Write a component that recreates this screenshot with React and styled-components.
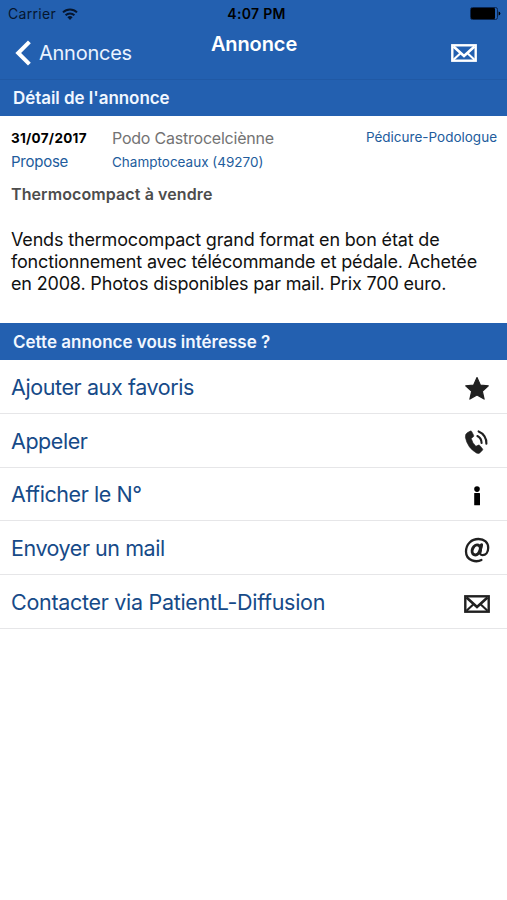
import React from 'react'
import styled, { createGlobalStyle } from 'styled-components'

const GlobalStyle = createGlobalStyle`
  * {
    box-sizing: border-box;
  }

  body {
    margin: 0;
    background-color: #fff;
    font-family: Inter, "Liberation Sans", sans-serif;
  }

  h1, h2, h3, p {
    margin: 0;
  }
`

const WifiIcon = () => (
  <svg width="16" height="12" viewBox="0 0 16 12">
    <path d="M1 4.4 A10 10 0 0 1 15 4.4" fill="none" stroke="#06162e" strokeWidth="2" />
    <path d="M3.6 7.2 A6.3 6.3 0 0 1 12.4 7.2" fill="none" stroke="#06162e" strokeWidth="2" />
    <path d="M8 12 L5.4 9.3 A3.8 3.8 0 0 1 10.6 9.3 Z" fill="#06162e" />
  </svg>
)

const BatteryIcon = () => (
  <svg width="31" height="13" viewBox="0 0 31 13">
    <rect x="0.5" y="0.5" width="27" height="12" rx="2" fill="none" stroke="#0a2650" strokeWidth="1" />
    <rect x="1" y="1" width="24" height="11" rx="1" fill="#000" />
    <path d="M28.6 4.4 Q30.4 5 30.4 6.5 T28.6 8.6 Z" fill="#000" />
  </svg>
)

const ChevronIcon = () => (
  <svg width="17" height="26" viewBox="0 0 17 26">
    <path d="M14.4 1.8 L3.2 13 L14.4 24.2" fill="none" stroke="#fff" strokeWidth="4" />
  </svg>
)

const MailIcon = () => (
  <svg width="26" height="18" viewBox="0 0 26 18" fill="none" stroke="currentColor">
    <rect x="1.3" y="1.3" width="23.4" height="15.4" strokeWidth="2.4" />
    <path d="M2.5 2.5 L13 12 L23.5 2.5" strokeWidth="2.7" />
    <path d="M2.5 15.8 L9.2 9.6 M23.5 15.8 L16.8 9.6" strokeWidth="2.1" />
  </svg>
)

const StarIcon = () => (
  <svg width="26" height="25" viewBox="0 0 26 25">
    <path
      d="M13 1.6 L16.3 9 L24.3 9.8 L18.3 15.2 L20.1 23.1 L13 19 L5.9 23.1 L7.7 15.2 L1.7 9.8 L9.7 9 Z"
      fill="currentColor"
      stroke="currentColor"
      strokeWidth="1.2"
      strokeLinejoin="round"
    />
  </svg>
)

const PhoneIcon = () => (
  <svg width="26" height="26" viewBox="0 0 26 26">
    <path
      d="M3.2 3.8 L6.4 2 Q7.2 1.7 7.7 2.5 L9.7 6.4 Q10 7.2 9.3 7.8 L7.2 9.4 Q8.4 14 11.9 17.3 L14.4 16.1 Q15.2 15.8 15.8 16.5 L18.6 19.9 Q19 20.7 18.4 21.3 L15.8 23.9 Q14.4 24.9 12.4 24 Q3.4 18.6 1.4 8.4 Q1.1 5.2 3.2 3.8 Z"
      fill="currentColor"
      stroke="currentColor"
      strokeWidth="0.6"
    />
    <path
      d="M13.4 7 A8 8 0 0 1 17.6 14 M14.6 2.4 A12.4 12.4 0 0 1 22.4 14.8"
      fill="none"
      stroke="currentColor"
      strokeWidth="2.1"
      strokeLinecap="round"
    />
  </svg>
)

const InfoIcon = () => (
  <svg width="26" height="20" viewBox="0 0 26 20">
    <circle cx="13" cy="3.1" r="2.8" fill="#000" />
    <rect x="10.2" y="7" width="5.8" height="12.2" rx="0.5" fill="#000" />
  </svg>
)

const AtIcon = () => (
  <svg width="26" height="26" viewBox="0 0 26 26" fill="none" stroke="currentColor" strokeLinecap="round">
    <path
      d="M17.4 23 C13 25.4 2 24.6 2 14.6 C2 7 7.6 2 14.4 2 C20.4 2 24.2 5.6 24.2 10.8 C24.2 15.6 21.6 18.2 18.6 18.2 C16.4 18.2 15.8 16.8 16.2 14.8 L17.8 7.6"
      strokeWidth="2.3"
    />
    <ellipse cx="12.2" cy="12.9" rx="3.8" ry="5.2" transform="rotate(24 12.2 12.9)" strokeWidth="3" />
    <path d="M17.4 8 L15.8 15.6" strokeWidth="3" />
  </svg>
)

const actions = [
  { id: 1, label: 'Ajouter aux favoris', icon: <StarIcon />, spacing: '-0.4px' },
  { id: 2, label: 'Appeler', icon: <PhoneIcon />, spacing: '-0.45px' },
  { id: 3, label: 'Afficher le N°', icon: <InfoIcon />, spacing: '-0.42px' },
  { id: 4, label: 'Envoyer un mail', icon: <AtIcon />, spacing: '-0.46px' },
  { id: 5, label: 'Contacter via PatientL-Diffusion', icon: <MailIcon />, spacing: '-0.3px' },
]

const App = () => {
  return (
    <Screen>
      <GlobalStyle />
      <Header>
        <StatusBar>
          <Carrier>
            Carrier
            <WifiIcon />
          </Carrier>
          <Clock>4:07 PM</Clock>
          <Battery>
            <BatteryIcon />
          </Battery>
        </StatusBar>
        <NavBar>
          <BackLink>
            <ChevronIcon />
            <span>Annonces</span>
          </BackLink>
          <Title>Annonce</Title>
          <MailButton>
            <MailIcon />
          </MailButton>
        </NavBar>
      </Header>
      <SectionTitle>Détail de l'annonce</SectionTitle>
      <Details>
        <Meta>
          <Day>31/07/2017</Day>
          <Author>Podo Castrocelciènne</Author>
          <Job>Pédicure-Podologue</Job>
          <Kind>Propose</Kind>
          <City>Champtoceaux (49270)</City>
        </Meta>
        <Subject>Thermocompact à vendre</Subject>
        <Message>
          Vends thermocompact grand format en bon état de<br />
          fonctionnement avec télécommande et pédale. Achetée<br />
          en 2008. Photos disponibles par mail. Prix 700 euro.
        </Message>
      </Details>
      <SectionTitle $tall>Cette annonce vous intéresse ?</SectionTitle>
      <Actions>
        {actions.map((curElem) => {
          const { id, label, icon, spacing } = curElem
          return (
            <Action key={id}>
              <ActionLabel $spacing={spacing}>{label}</ActionLabel>
              <ActionIcon>{icon}</ActionIcon>
            </Action>
          )
        })}
      </Actions>
    </Screen>
  )
}

const Screen = styled.main`
  width: 507px;
  height: 900px;
  overflow: hidden;
  background-color: #fff;
`

const Header = styled.header`
  height: 80px;
  color: #fff;
  background-color: #2360b0;
  border-bottom: 1px solid #2059a5;
`

const StatusBar = styled.div`
  display: grid;
  grid-template-columns: 1fr auto 1fr;
  align-items: center;
  height: 27px;
  padding: 0 6px 0 8px;
  color: #000;
  font-size: 14px;
`

const Carrier = styled.span`
  display: flex;
  align-items: center;
  gap: 6px;
  color: #06162e;
  letter-spacing: 0.3px;
`

const Clock = styled.span`
  padding-left: 4px;
  font-weight: 600;
  letter-spacing: 0.3px;
`

const Battery = styled.span`
  display: flex;
  justify-content: flex-end;
`

const NavBar = styled.nav`
  display: grid;
  grid-template-columns: 1fr auto 1fr;
  height: 52px;
`

const BackLink = styled.a`
  display: flex;
  align-items: center;
  gap: 7px;
  padding-left: 15px;
  font-size: 20px;
  letter-spacing: -0.25px;
  color: #eaf3ff;
`

const Title = styled.h1`
  padding: 5px 0 0 1px;
  font-size: 20px;
  line-height: 24px;
  font-weight: 600;
  letter-spacing: -0.1px;
`

const MailButton = styled.span`
  display: flex;
  align-items: center;
  justify-content: flex-end;
  padding-right: 30px;
`

const SectionTitle = styled.h2`
  display: flex;
  align-items: center;
  height: ${({ $tall }) => ($tall ? '37px' : '36px')};
  padding-left: 13px;
  color: #f1f7ff;
  font-size: 17px;
  font-weight: 600;
  letter-spacing: ${({ $tall }) => ($tall ? '0' : '-0.05px')};
  background-color: #2360b0;
`

const Details = styled.section`
  height: 207px;
  padding: 10px 10px 0 11px;
`

const Meta = styled.div`
  display: grid;
  grid-template-columns: 101px 1fr auto;
  grid-template-rows: 24px 23px;
  align-items: center;
  color: #225c9c;
`

const Day = styled.span`
  color: #000;
  font-size: 13.5px;
  font-weight: 700;
  letter-spacing: 0.28px;
`

const Author = styled.span`
  color: #737373;
  font-size: 16px;
  letter-spacing: -0.22px;
`

const Job = styled.span`
  padding-bottom: 2px;
  font-size: 13.5px;
`

const Kind = styled.span`
  font-size: 15px;
  letter-spacing: -0.25px;
`

const City = styled.span`
  font-size: 13.5px;
`

const Subject = styled.h3`
  margin-top: 10px;
  color: #4d4d4d;
  font-size: 16px;
  line-height: 22px;
  font-weight: 600;
  letter-spacing: 0.1px;
`

const Message = styled.p`
  margin-top: 24px;
  color: #111;
  font-size: 18px;
  line-height: 21.8px;
  letter-spacing: -0.17px;
  white-space: nowrap;
`

const Actions = styled.section`
  color: #202020;
`

const Action = styled.div`
  display: flex;
  align-items: center;
  justify-content: space-between;
  height: 53.8px;
  padding: 1px 17px 0 11px;
  border-bottom: 1px solid #e6e6e8;
`

const ActionLabel = styled.span`
  color: #164a88;
  font-size: 21.5px;
  letter-spacing: ${({ $spacing }) => $spacing};
`

const ActionIcon = styled.span`
  display: flex;
  padding-top: 3px;
`

export default App
